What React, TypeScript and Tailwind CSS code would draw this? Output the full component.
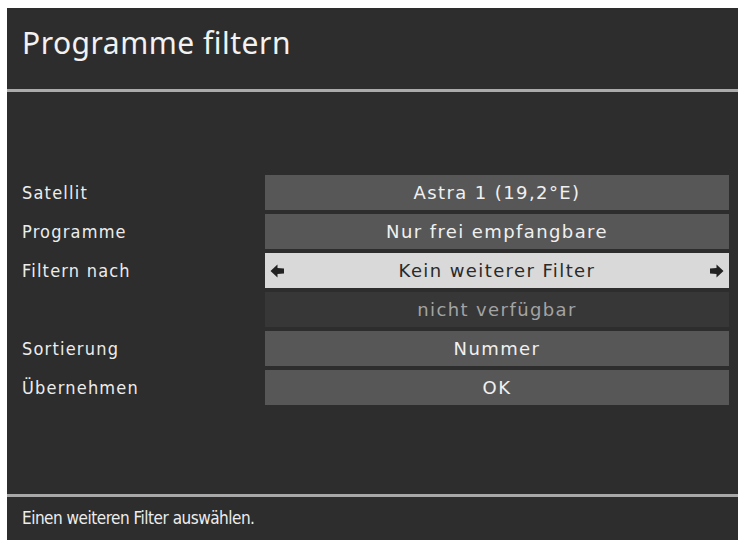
const FONT = { fontFamily: '"DejaVu Sans", "Noto Sans", sans-serif' };
const NARROW = { fontFamily: '"DejaVu Sans Condensed", "Noto Sans", sans-serif', fontStretch: "condensed" };

type Row = {
  label?: string;
  value: string;
  kind: "normal" | "active" | "disabled";
};

const ROWS: Row[] = [
  { label: "Satellit", value: "Astra 1 (19,2°E)", kind: "normal" },
  { label: "Programme", value: "Nur frei empfangbare", kind: "normal" },
  { label: "Filtern nach", value: "Kein weiterer Filter", kind: "active" },
  { value: "nicht verfügbar", kind: "disabled" },
  { label: "Sortierung", value: "Nummer", kind: "normal" },
  { label: "Übernehmen", value: "OK", kind: "normal" },
];

function Arrow({ dir }: { dir: "left" | "right" }) {
  return (
    <svg width="15" height="14" viewBox="0 0 15 14" className={dir === "right" ? "rotate-180" : ""}>
      <path d="M0.5 7 L7.5 0.5 L7.5 4 L14 4.5 L14 9.5 L7.5 10 L7.5 13.5 Z" fill="#222" />
    </svg>
  );
}

function OptionRow({ row }: { row: Row }) {
  const box =
    row.kind === "active"
      ? "bg-[#d9d9d9] text-[#2a2a2a]"
      : row.kind === "disabled"
        ? "bg-[#373737] text-[#a3a3a3]"
        : "bg-[#575757] text-[#f0f0f0]";
  return (
    <div className="flex h-[35px] items-center">
      <div className="w-[243px] shrink-0 text-[18px] tracking-[1.2px] text-[#ececec]" style={NARROW}>
        {row.label}
      </div>
      <div className={`flex h-full flex-1 items-center justify-between px-[5px] text-[18px] tracking-[1.4px] ${box}`}>
        <span className="flex w-[15px]">{row.kind === "active" && <Arrow dir="left" />}</span>
        <span>{row.value}</span>
        <span className="flex w-[15px]">{row.kind === "active" && <Arrow dir="right" />}</span>
      </div>
    </div>
  );
}

export default function App() {
  return (
    <div className="h-[540px] w-[740px] overflow-hidden bg-white pl-[7px] pt-[8px]" style={FONT}>
      <div className="flex h-[532px] w-[731px] flex-col bg-[#2d2d2d]">
        <div className="flex h-[81px] items-center px-[15px] pb-[12px]">
          <h1 className="text-[30px] tracking-[0.5px] text-[#f2f2f2]" style={{ fontFamily: '"Noto Sans", sans-serif' }}>
            Programme filtern
          </h1>
        </div>
        <div className="h-[3px] bg-[#ababab]" />
        <div className="flex flex-1 flex-col gap-[4px] pl-[15px] pr-[9px] pt-[83px]">
          {ROWS.map((row, i) => (
            <OptionRow key={i} row={row} />
          ))}
        </div>
        <div className="h-[3px] bg-[#a8a8a8]" />
        <div className="flex h-[43px] items-center px-[15px] text-[17px] tracking-[-0.5px] text-[#ececec]" style={NARROW}>
          Einen weiteren Filter auswählen.
        </div>
      </div>
    </div>
  );
}
